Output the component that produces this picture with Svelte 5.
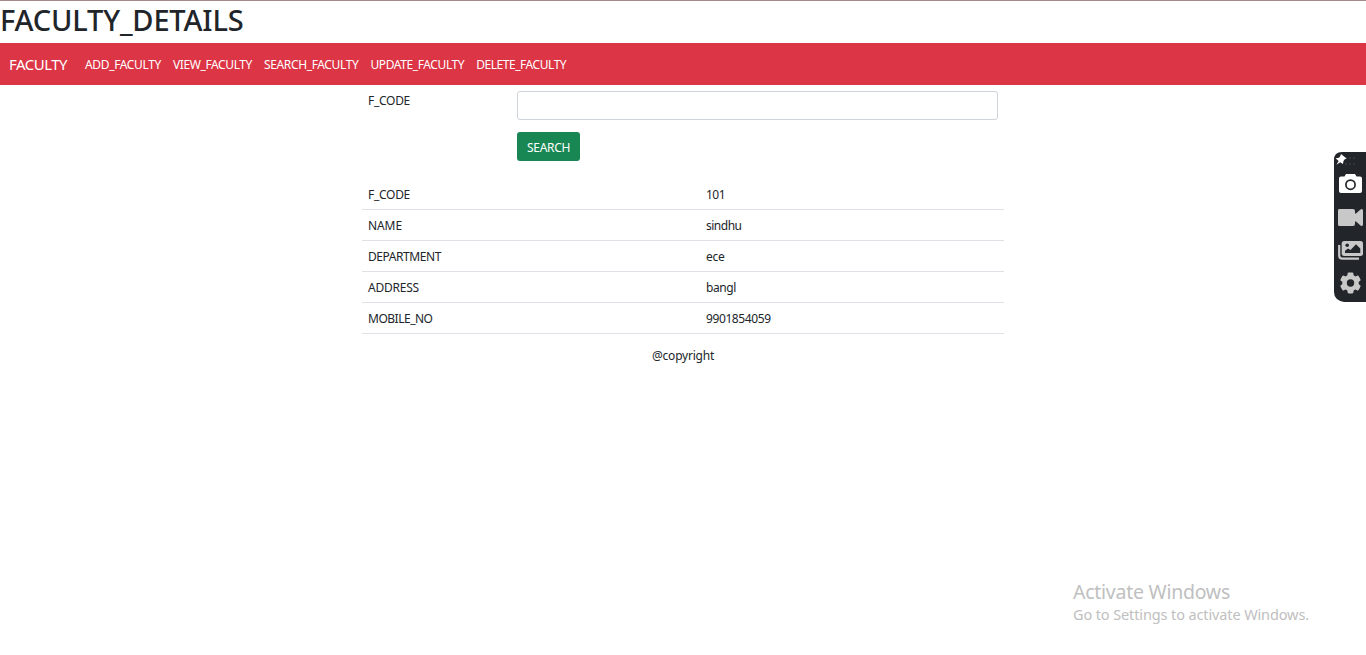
<script>
  const links = [
    { label: 'ADD_FACULTY', width: 76 },
    { label: 'VIEW_FACULTY', width: 79 },
    { label: 'SEARCH_FACULTY', width: 94.4 },
    { label: 'UPDATE_FACULTY', width: 93.8 },
    { label: 'DELETE_FACULTY', width: 90 }
  ];
  const rows = [
    { label: 'F_CODE', width: 42, value: '101', valueWidth: 19 },
    { label: 'NAME', width: 34, value: 'sindhu', valueWidth: 35.5 },
    { label: 'DEPARTMENT', width: 73, value: 'ece', valueWidth: 18.5 },
    { label: 'ADDRESS', width: 51, value: 'bangl', valueWidth: 30 },
    { label: 'MOBILE_NO', width: 64.5, value: '9901854059', valueWidth: 64.6 }
  ];
  let code = $state('');

  // Tracks the label so that it fills the given advance width.
  function track(node, width) {
    const natural = node.getBoundingClientRect().width;
    node.style.letterSpacing = `${(width - natural) / node.textContent.length}px`;
  }
</script>

<div class="page">
  <h1><span use:track={243.5}>FACULTY_DETAILS</span></h1>
  <nav>
    <a class="brand" href="#home"><span use:track={58}>FACULTY</span></a>
    {#each links as link}
      <a href="#{link.label}"><span use:track={link.width}>{link.label}</span></a>
    {/each}
  </nav>

  <main>
    <form onsubmit={(e) => e.preventDefault()}>
      <label for="code"><span use:track={42}>F_CODE</span></label>
      <div class="controls">
        <input id="code" bind:value={code} />
        <button><span use:track={43}>SEARCH</span></button>
      </div>
    </form>
    <div class="details">
      {#each rows as row}
        <div class="row">
          <div class="name"><span use:track={row.width}>{row.label}</span></div>
          <div><span use:track={row.valueWidth}>{row.value}</span></div>
        </div>
      {/each}
    </div>
    <footer><span use:track={62}>@copyright</span></footer>
  </main>

  <aside class="recorder">
    <svg width="32" height="150" viewBox="0 0 32 150">
      <path d="M8 0H32V150H10Q0 148 0 140V8Q0 0 8 0Z" fill="#22262b" />
      <g fill="#33363b">
        <rect x="11" y="5" width="2" height="2" /><rect x="15" y="5" width="2" height="2" /><rect x="19" y="5" width="2" height="2" />
        <rect x="11" y="11" width="2" height="2" /><rect x="15" y="11" width="2" height="2" /><rect x="19" y="11" width="2" height="2" />
      </g>
      <path d="M7 2L12.5 6.6L10.5 7.5L9.4 9.2L9 12L6.2 10.2L2.5 12.8L4.6 8.9L1.6 6.3L5 5.8L6.2 4.3Z" fill="#fff" />
      <path d="M7 24.5H10.5L12 22H21L22.5 24.5H26Q28 24.5 28 26.5V39Q28 41 26 41H7Q5 41 5 39V26.5Q5 24.5 7 24.5Z" fill="#fff" />
      <circle cx="16.5" cy="32.7" r="4.6" fill="#fff" stroke="#22262b" stroke-width="1.7" />
      <path d="M5 57H19Q21 57 21 59V61.5H22L26.5 57.5Q29 56 29 59V72Q29 75 26.5 73.5L22 69.5H21V72Q21 74 19 74H5Q4 74 4 72V59Q4 57 5 57Z" fill="#c8c8c8" />
      <path d="M5.2 93V103.5Q5.2 106.7 8.4 106.7H25" fill="none" stroke="#c8c8c8" stroke-width="2.2" />
      <rect x="7.7" y="89" width="21.3" height="15" rx="2.5" fill="#c8c8c8" />
      <circle cx="13.2" cy="93.2" r="1.8" fill="#22262b" />
      <path d="M11 101V98.7L14 96.5L16.5 98L22 92.3L26.3 96.5V101Z" fill="#22262b" />
      <g transform="translate(16.5 131)" fill="#c8c8c8">
        {#each [0, 60, 120] as angle}
          <rect x="-3" y="-10.5" width="6" height="21" rx="1.4" transform="rotate({angle})" />
        {/each}
        <circle r="8.3" />
        <circle r="3.7" fill="#22262b" />
      </g>
    </svg>
  </aside>

  <div class="watermark">
    <p class="big"><span use:track={157}>Activate Windows</span></p>
    <p><span use:track={236}>Go to Settings to activate Windows.</span></p>
  </div>
</div>

<style>
  :global(body) { background: #fff; }
  .page {
    position: relative;
    box-sizing: border-box;
    height: 655px;
    overflow: hidden;
    border-top: 1px solid #a58b87;
    color: #212529;
    font: 12px/18px "Noto Sans", "Open Sans", sans-serif;
  }
  span { white-space: nowrap; }
  h1 {
    box-sizing: border-box;
    height: 42px;
    margin: 0;
    font-size: 29px;
    font-weight: 500;
    line-height: 38px;
  }
  nav {
    box-sizing: border-box;
    display: flex;
    align-items: center;
    gap: 12px;
    height: 42px;
    padding-left: 9px;
    background: #dc3545;
  }
  nav a { padding-top: 2px; color: #fff; text-decoration: none; }
  nav .brand { margin-right: 6px; padding-top: 0; font-size: 15px; }
  main { width: 642px; margin: 0 auto; }
  form { display: flex; padding: 6px; }
  label { width: 149px; height: 18px; padding-top: 1px; }
  .controls { flex: 1; }
  input {
    display: block;
    box-sizing: border-box;
    width: 100%;
    height: 29px;
    border: 1px solid #ced4da;
    border-radius: 3px;
    outline: 0;
    background: #fff;
  }
  button {
    display: block;
    width: 63px;
    height: 29px;
    margin-top: 12px;
    padding: 3px 0 0;
    border: 0;
    border-radius: 3px;
    background: #198754;
    color: #fff;
    font: inherit;
  }
  .details { margin-top: 12px; }
  .row { display: flex; height: 30px; padding: 0 6px; border-bottom: 1px solid #dee2e6; line-height: 31px; }
  .name { width: 338px; }
  footer { margin-top: 13px; text-align: center; }
  .recorder { position: absolute; top: 151px; right: 0; width: 32px; height: 150px; }
  .recorder svg { display: block; }
  .watermark { position: absolute; left: 1073px; top: 578px; color: #c0c0c0; }
  p { margin: 0; font-size: 14.5px; line-height: 20px; }
  .big { font-size: 19.5px; line-height: 25px; }
</style>
